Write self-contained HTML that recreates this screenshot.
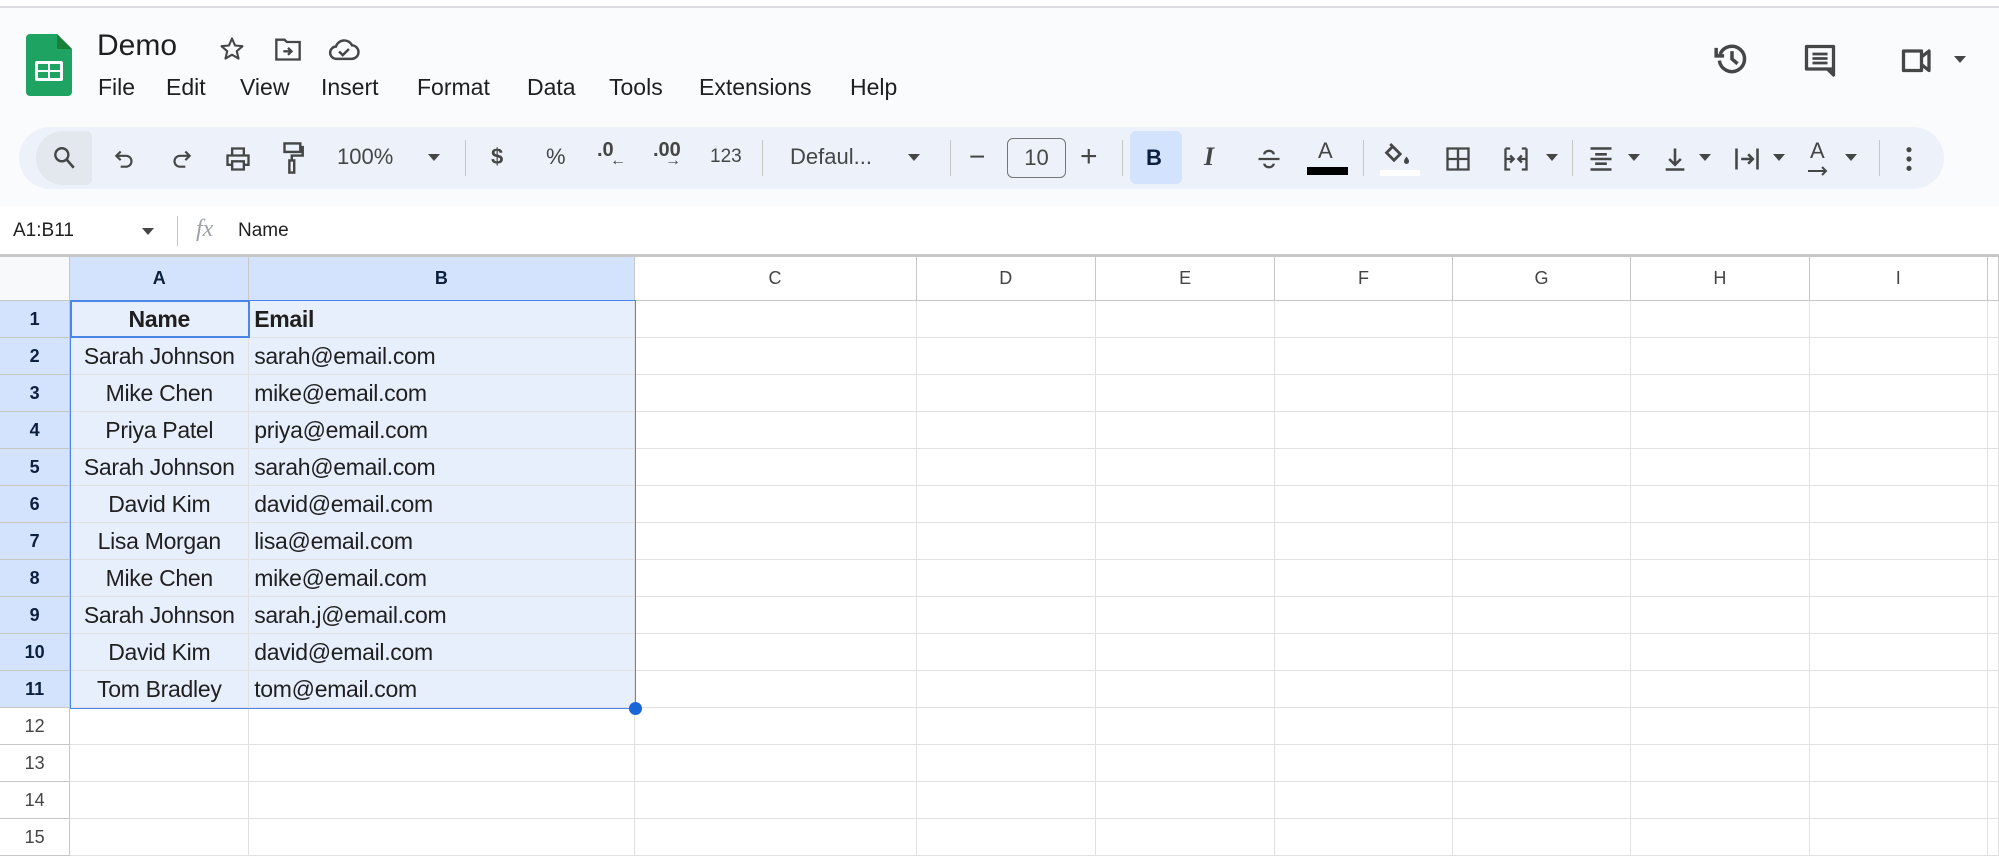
<!DOCTYPE html>
<html><head><meta charset="utf-8"><style>
*{margin:0;padding:0;box-sizing:border-box}
body{width:1999px;height:847px;overflow:hidden;background:#fff;font-family:"Liberation Sans",Arial,sans-serif;color:#1f1f1f;position:relative}
.a{position:absolute}
.hdr{left:0;top:6px;width:1999px;height:200px;background:#f9fbfd;border-top:2px solid #dadce0}
.menu span{position:absolute;top:74px;font-size:23px;color:#1f1f1f}
.tb{left:19px;top:127px;width:1925px;height:62px;background:#edf2fa;border-radius:31px}
.ic{position:absolute;top:145px}
.t{position:absolute;font-size:22px;color:#444746;top:144px}
.sep{position:absolute;top:140px;width:1px;height:36px;background:#c4c7c5}
.dd{position:absolute;top:154px;width:0;height:0;border-left:6px solid transparent;border-right:6px solid transparent;border-top:7px solid #444746}
table{position:absolute;left:0;top:256px;border-collapse:collapse;table-layout:fixed}
td{border:1px solid #e1e1e1;height:37px;font-size:23px;padding:0 5px;white-space:nowrap;overflow:hidden;letter-spacing:-0.3px}
td:first-child{border-left:none}
tr.h td{height:44px;background:#fff;border-color:#c7c7c7;text-align:center;font-size:18px;color:#444;letter-spacing:0}
td.rn{text-align:center;font-size:18px;color:#444;border-color:#c7c7c7;padding:0;letter-spacing:0}
tr.s td.rn{background:#d3e3fd;color:#0b1f3f;font-weight:bold}
tr.h td.sel{background:#d3e3fd;color:#0b1f3f;font-weight:bold}
tr.s td.c{background:#e8effc}
td.ca{text-align:center;padding:0 2px}
</style></head><body>
<div class="a hdr"></div>
<svg class="a" style="left:26px;top:34px" width="46" height="62" viewBox="0 0 46 62"><path d="M4 0H31L46 15V58a4 4 0 0 1-4 4H4a4 4 0 0 1-4-4V4a4 4 0 0 1 4-4z" fill="#1ea362"/><path d="M31 0V15H46z" fill="#188038"/><rect x="9" y="27" width="28" height="20" rx="2" fill="#fff"/><rect x="12" y="30" width="10" height="6" fill="#1ea362"/><rect x="24" y="30" width="10" height="6" fill="#1ea362"/><rect x="12" y="38" width="10" height="6" fill="#1ea362"/><rect x="24" y="38" width="10" height="6" fill="#1ea362"/></svg>
<div class="a" style="left:97px;top:29px;font-size:30px">Demo</div>
<svg class="a" style="left:218px;top:35px" width="28" height="28" viewBox="0 0 24 24"><path d="M12 3l2.6 6 6.4.6-4.9 4.3 1.5 6.3L12 16.9 6.4 20.2l1.5-6.3L3 9.6l6.4-.6z" fill="none" stroke="#444746" stroke-width="1.8" stroke-linejoin="round"/></svg>
<svg class="a" style="left:274px;top:36px" width="28" height="26" viewBox="0 0 24 22"><path d="M2 3h7l2 2h11v15H2z" fill="none" stroke="#444746" stroke-width="2"/><path d="M8 13h7M12 10l3 3-3 3" fill="none" stroke="#444746" stroke-width="2"/></svg>
<svg class="a" style="left:328px;top:36px" width="32" height="26" viewBox="0 0 26 20"><path d="M7 18a5 5 0 0 1-.5-10A7 7 0 0 1 19.5 7 5.5 5.5 0 0 1 19 18z" fill="none" stroke="#444746" stroke-width="2"/><path d="M9 12l3 3 5-5" fill="none" stroke="#444746" stroke-width="2"/></svg>
<div class="menu">
<span style="left:98px">File</span><span style="left:166px">Edit</span><span style="left:240px">View</span><span style="left:321px">Insert</span><span style="left:417px">Format</span><span style="left:527px">Data</span><span style="left:609px">Tools</span><span style="left:699px">Extensions</span><span style="left:850px">Help</span>
</div>
<svg class="a" style="left:1713px;top:40px" width="38" height="38" viewBox="0 0 24 24"><path d="M4.5 9A8 8 0 1 1 4 13" fill="none" stroke="#444746" stroke-width="2.2"/><path d="M2 5v5h5" fill="none" stroke="#444746" stroke-width="2.2"/><path d="M12 7v5l3.5 3" fill="none" stroke="#444746" stroke-width="2.2"/></svg>
<svg class="a" style="left:1802px;top:42px" width="36" height="36" viewBox="0 0 24 24"><path d="M3 3h18v15H3zM17 18l4 4v-4" fill="none" stroke="#444746" stroke-width="2.2" stroke-linejoin="round"/><path d="M7 8h10M7 11h10M7 14h10" stroke="#444746" stroke-width="1.8"/></svg>
<svg class="a" style="left:1899px;top:45px" width="36" height="30" viewBox="0 0 24 20"><path d="M3 4h12v13H3zM15 8l5-4v13l-5-4" fill="none" stroke="#444746" stroke-width="2.2" stroke-linejoin="round"/></svg>
<div class="dd" style="left:1954px;top:56px"></div>
<div class="a tb"></div>
<div class="a" style="left:36px;top:131px;width:56px;height:54px;background:#e3e8ef;border-radius:27px 6px 6px 27px"></div>
<svg class="ic" style="left:51px" width="26" height="26" viewBox="0 0 24 24"><circle cx="10" cy="9" r="6" fill="none" stroke="#444746" stroke-width="2.2"/><path d="M14.5 13.5L21 21" stroke="#444746" stroke-width="2.4"/></svg>
<svg class="ic" style="left:112px" width="26" height="26" viewBox="0 0 24 24"><path d="M8 6L4 10l4 4" fill="none" stroke="#444746" stroke-width="2"/><path d="M4 10h9a5 5 0 0 1 0 10H8" fill="none" stroke="#444746" stroke-width="2"/></svg>
<svg class="ic" style="left:168px" width="26" height="26" viewBox="0 0 24 24"><path d="M16 6l4 4-4 4" fill="none" stroke="#444746" stroke-width="2"/><path d="M20 10h-9a5 5 0 0 0 0 10h5" fill="none" stroke="#444746" stroke-width="2"/></svg>
<svg class="ic" style="left:224px" width="28" height="28" viewBox="0 0 24 24"><path d="M7 8V3h10v5M7 17H3V9h18v8h-4M7 14h10v7H7z" fill="none" stroke="#444746" stroke-width="2"/></svg>
<svg class="ic" style="left:280px;top:141px" width="26" height="34" viewBox="0 0 20 28"><rect x="3" y="2" width="13" height="7" fill="none" stroke="#444746" stroke-width="2"/><path d="M16 5h2v7H9v4" fill="none" stroke="#444746" stroke-width="2"/><rect x="7" y="16" width="4" height="10" fill="none" stroke="#444746" stroke-width="2"/></svg>
<div class="t" style="left:337px">100%</div><div class="dd" style="left:428px"></div>
<div class="sep" style="left:465px"></div>
<div class="t" style="left:491px;font-weight:bold">$</div>
<div class="t" style="left:546px">%</div>
<div class="t" style="left:597px;font-size:20px;font-weight:bold;top:139px">.0</div><div class="t" style="left:610px;top:152px;font-size:16px">←</div>
<div class="t" style="left:653px;font-size:20px;font-weight:bold;top:139px">.00</div><div class="t" style="left:665px;top:152px;font-size:16px">→</div>
<div class="t" style="left:710px;font-size:19px;top:146px">123</div>
<div class="sep" style="left:762px"></div>
<div class="t" style="left:790px">Defaul...</div><div class="dd" style="left:908px"></div>
<div class="sep" style="left:950px"></div>
<div class="t" style="left:969px;font-size:28px;top:141px">−</div>
<div class="a" style="left:1007px;top:138px;width:59px;height:40px;border:1.5px solid #747775;border-radius:6px;font-size:22px;text-align:center;line-height:38px;color:#444746">10</div>
<div class="t" style="left:1080px;font-size:30px;top:140px">+</div>
<div class="sep" style="left:1122px"></div>
<div class="a" style="left:1130px;top:131px;width:52px;height:53px;background:#d3e3fd;border-radius:6px"></div>
<div class="t" style="left:1146px;font-weight:bold;color:#0b1f3f;top:145px">B</div>
<div class="t" style="left:1204px;font-style:italic;font-family:'Liberation Serif',serif;font-size:26px;top:142px;font-weight:bold">I</div>
<svg class="ic" style="left:1255px" width="28" height="28" viewBox="0 0 24 24"><path d="M3 12h18" stroke="#444746" stroke-width="2"/><path d="M8 8a4 3 0 0 1 8 0M8 16a4 3 0 0 0 8 0" fill="none" stroke="#444746" stroke-width="2"/></svg>
<div class="t" style="left:1318px;top:138px">A</div><div class="a" style="left:1307px;top:167px;width:41px;height:8px;background:#000"></div>
<div class="sep" style="left:1363px"></div>
<svg class="ic" style="left:1384px;top:139px" width="30" height="30" viewBox="0 0 24 24"><path d="M5 4l8 8-5 5-6-6 5-5" fill="none" stroke="#444746" stroke-width="2.2"/><path d="M18 14c1.5 2 2 3 2 4a2 2 0 0 1-4 0c0-1 .5-2 2-4z" fill="#444746"/></svg>
<div class="a" style="left:1380px;top:170px;width:40px;height:6px;background:#fff"></div>
<svg class="ic" style="left:1444px" width="28" height="28" viewBox="0 0 24 24"><path d="M3 3h18v18H3zM12 3v18M3 12h18" fill="none" stroke="#444746" stroke-width="2"/></svg>
<svg class="ic" style="left:1502px" width="28" height="28" viewBox="0 0 24 24"><path d="M3 3h4M3 3v18h4M21 3h-4M21 3v18h-4M3 12h6M7 9l3 3-3 3M21 12h-6M17 9l-3 3 3 3" fill="none" stroke="#444746" stroke-width="2"/></svg>
<div class="dd" style="left:1546px"></div>
<div class="sep" style="left:1572px"></div>
<svg class="ic" style="left:1587px" width="28" height="28" viewBox="0 0 24 24"><path d="M3 3h18M7 8h10M3 12h18M7 16h10M3 21h18" stroke="#444746" stroke-width="2.2"/></svg>
<div class="dd" style="left:1628px"></div>
<svg class="ic" style="left:1661px" width="28" height="28" viewBox="0 0 24 24"><path d="M12 3v14M7 12l5 5 5-5M4 21h16" fill="none" stroke="#444746" stroke-width="2.2"/></svg>
<div class="dd" style="left:1699px"></div>
<svg class="ic" style="left:1733px" width="28" height="28" viewBox="0 0 24 24"><path d="M3 3v18M21 3v18M7 12h10M13 8l4 4-4 4" fill="none" stroke="#444746" stroke-width="2.2"/></svg>
<div class="dd" style="left:1773px"></div>
<div class="t" style="left:1810px;top:138px">A</div><svg class="ic" style="left:1808px;top:165px" width="22" height="12" viewBox="0 0 22 12"><path d="M0 6h18M14 2l4 4-4 4" fill="none" stroke="#444746" stroke-width="2"/></svg>
<div class="dd" style="left:1845px"></div>
<div class="sep" style="left:1879px"></div>
<svg class="ic" style="left:1902px" width="14" height="28" viewBox="0 0 8 24"><circle cx="4" cy="4" r="2.2" fill="#444746"/><circle cx="4" cy="12" r="2.2" fill="#444746"/><circle cx="4" cy="20" r="2.2" fill="#444746"/></svg>
<div class="a" style="left:0;top:206px;width:1999px;height:50px;background:#fff"></div>
<div class="a" style="left:13px;top:220px;font-size:19px">A1:B11</div>
<div class="dd" style="left:142px;top:228px"></div>
<div class="a" style="left:177px;top:216px;width:1px;height:30px;background:#c4c7c5"></div>
<div class="a" style="left:196px;top:216px;font-size:24px;font-style:italic;font-family:'Liberation Serif',serif;color:#9aa0a6">fx</div>
<div class="a" style="left:238px;top:220px;font-size:19px">Name</div>
<div class="a" style="left:0;top:254px;width:1999px;height:2px;background:#c7c7c7"></div>
<table>
<colgroup><col style="width:70px"><col style="width:179px"><col style="width:386px"><col style="width:283px"><col style="width:180px"><col style="width:180px"><col style="width:178px"><col style="width:179px"><col style="width:179px"><col style="width:179px"><col style="width:10px"></colgroup>
<tr class="h"><td style="background:#f8f9fa"></td><td class="sel">A</td><td class="sel">B</td><td>C</td><td>D</td><td>E</td><td>F</td><td>G</td><td>H</td><td>I</td><td></td></tr>
<tr class="s"><td class="rn">1</td><td class="c ca" style="font-weight:bold">Name</td><td class="c" style="font-weight:bold">Email</td><td></td><td></td><td></td><td></td><td></td><td></td><td></td><td></td></tr>
<tr class="s"><td class="rn">2</td><td class="c ca">Sarah Johnson</td><td class="c">sarah@email.com</td><td></td><td></td><td></td><td></td><td></td><td></td><td></td><td></td></tr>
<tr class="s"><td class="rn">3</td><td class="c ca">Mike Chen</td><td class="c">mike@email.com</td><td></td><td></td><td></td><td></td><td></td><td></td><td></td><td></td></tr>
<tr class="s"><td class="rn">4</td><td class="c ca">Priya Patel</td><td class="c">priya@email.com</td><td></td><td></td><td></td><td></td><td></td><td></td><td></td><td></td></tr>
<tr class="s"><td class="rn">5</td><td class="c ca">Sarah Johnson</td><td class="c">sarah@email.com</td><td></td><td></td><td></td><td></td><td></td><td></td><td></td><td></td></tr>
<tr class="s"><td class="rn">6</td><td class="c ca">David Kim</td><td class="c">david@email.com</td><td></td><td></td><td></td><td></td><td></td><td></td><td></td><td></td></tr>
<tr class="s"><td class="rn">7</td><td class="c ca">Lisa Morgan</td><td class="c">lisa@email.com</td><td></td><td></td><td></td><td></td><td></td><td></td><td></td><td></td></tr>
<tr class="s"><td class="rn">8</td><td class="c ca">Mike Chen</td><td class="c">mike@email.com</td><td></td><td></td><td></td><td></td><td></td><td></td><td></td><td></td></tr>
<tr class="s"><td class="rn">9</td><td class="c ca">Sarah Johnson</td><td class="c">sarah.j@email.com</td><td></td><td></td><td></td><td></td><td></td><td></td><td></td><td></td></tr>
<tr class="s"><td class="rn">10</td><td class="c ca">David Kim</td><td class="c">david@email.com</td><td></td><td></td><td></td><td></td><td></td><td></td><td></td><td></td></tr>
<tr class="s"><td class="rn">11</td><td class="c ca">Tom Bradley</td><td class="c">tom@email.com</td><td></td><td></td><td></td><td></td><td></td><td></td><td></td><td></td></tr>
<tr><td class="rn">12</td><td></td><td></td><td></td><td></td><td></td><td></td><td></td><td></td><td></td><td></td></tr>
<tr><td class="rn">13</td><td></td><td></td><td></td><td></td><td></td><td></td><td></td><td></td><td></td><td></td></tr>
<tr><td class="rn">14</td><td></td><td></td><td></td><td></td><td></td><td></td><td></td><td></td><td></td><td></td></tr>
<tr><td class="rn">15</td><td></td><td></td><td></td><td></td><td></td><td></td><td></td><td></td><td></td><td></td></tr>
</table>
<div class="a" style="left:70px;top:300px;width:566px;height:409px;border:1.5px solid #4a86e8"></div>
<div class="a" style="left:70px;top:300px;width:180px;height:38px;border:2.5px solid #4a86e8"></div>
<div class="a" style="left:629px;top:702px;width:13px;height:13px;border-radius:50%;background:#1a66d9"></div>
</body></html>
